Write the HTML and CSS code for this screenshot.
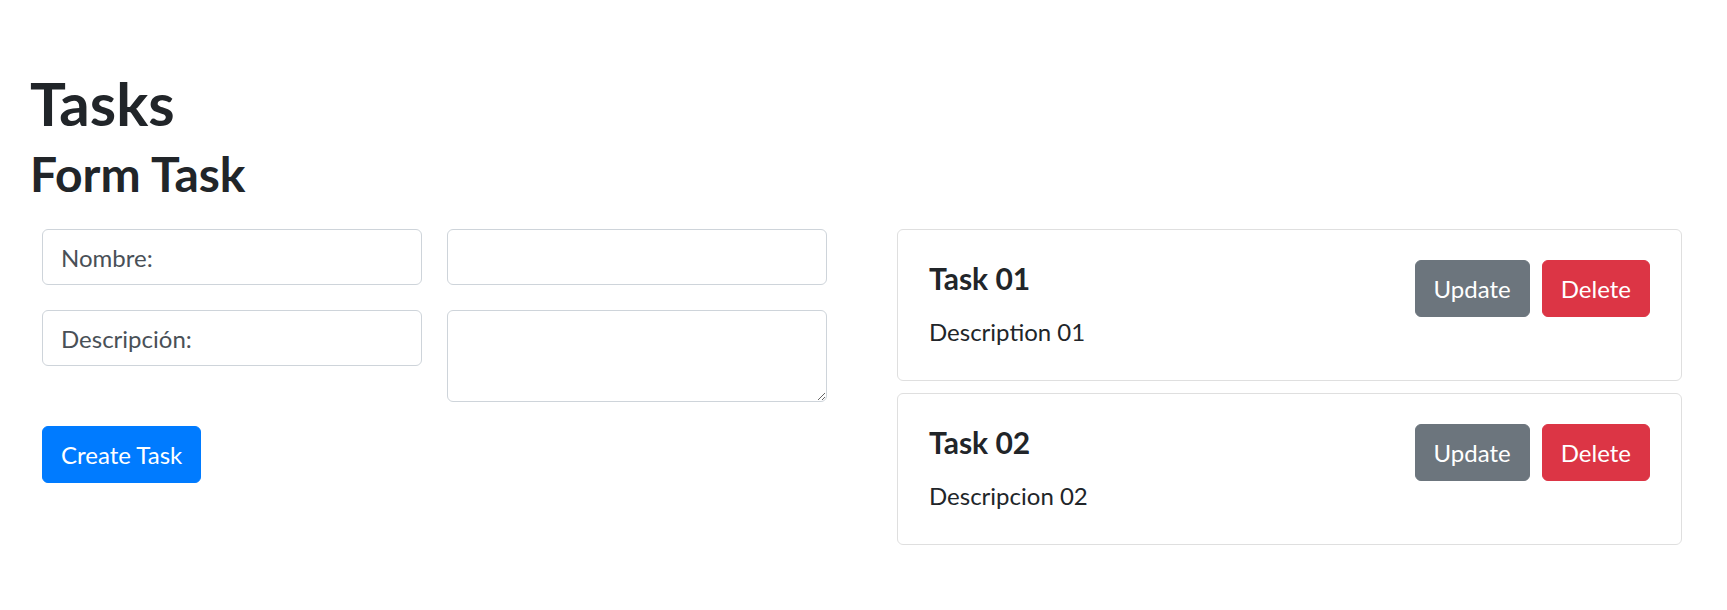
FILE: index.html
```html
<!DOCTYPE html>
<html lang="es">
<head>
<meta charset="utf-8">
<title>Tasks</title>
<link rel="stylesheet" href="styles.css">
</head>
<body>
<div class="page">
  <h1 class="page-title">Tasks</h1>
  <h2 class="section-title">Form Task</h2>
  <div class="main">
    <form class="task-form">
      <div class="form-grid">
        <input class="field field-label" type="text" value="Nombre:" readonly>
        <input class="field" type="text">
        <input class="field field-label" type="text" value="Descripción:" readonly>
        <textarea class="field field-area"></textarea>
      </div>
      <button type="button" class="btn btn-primary">Create Task</button>
    </form>
    <div class="task-list">
      <div class="card">
        <div class="card-actions">
          <button type="button" class="btn btn-secondary">Update</button>
          <button type="button" class="btn btn-danger">Delete</button>
        </div>
        <h5 class="card-title">Task 01</h5>
        <p class="card-text">Description 01</p>
      </div>
      <div class="card">
        <div class="card-actions">
          <button type="button" class="btn btn-secondary">Update</button>
          <button type="button" class="btn btn-danger">Delete</button>
        </div>
        <h5 class="card-title">Task 02</h5>
        <p class="card-text">Descripcion 02</p>
      </div>
    </div>
  </div>
</div>
</body>
</html>
```
FILE: styles.css
```css
* { box-sizing: border-box; }
html, body { margin: 0; padding: 0; background: #fff; }
body {
  font-family: "Lato", "Open Sans", sans-serif;
  color: #212529;
  font-size: 24px;
  line-height: 36px;
}
.page {
  padding: 67px 30px 0 30px;
}
.page-title {
  margin: 0 0 6px 0;
  font-size: 60px;
  line-height: 72px;
  font-weight: 700;
}
.section-title {
  margin: 0 0 26px 0;
  font-size: 48px;
  line-height: 58px;
  font-weight: 700;
}
.main {
  display: grid;
  grid-template-columns: 1fr 1fr;
  column-gap: 70px;
  padding: 0 15px 0 12px;
  align-items: start;
}
.task-form {
  display: flex;
  flex-direction: column;
  align-items: flex-start;
  gap: 24px;
}
.form-grid {
  width: 100%;
  display: grid;
  grid-template-columns: 1fr 1fr;
  column-gap: 25px;
  row-gap: 25px;
  align-items: start;
}
.field {
  display: block;
  width: 100%;
  height: 56px;
  padding: 0 18px;
  font-family: inherit;
  font-size: 24px;
  line-height: 36px;
  color: #495057;
  background: #fff;
  border: 1px solid #ced4da;
  border-radius: 6px;
  outline: none;
}
.field-area {
  height: 92px;
  padding: 9px 18px;
  resize: vertical;
}
.btn {
  display: inline-block;
  height: 57px;
  padding: 0 18px;
  font-family: inherit;
  font-size: 24px;
  line-height: 55px;
  font-weight: 400;
  color: #fff;
  border: 1px solid transparent;
  border-radius: 6px;
  cursor: pointer;
}
.btn-primary { background: #007bff; border-color: #007bff; }
.btn-secondary { background: #6c757d; border-color: #6c757d; }
.btn-danger { background: #dc3545; border-color: #dc3545; }
.task-list {
  display: flex;
  flex-direction: column;
  gap: 12px;
}
.card {
  border: 1px solid #dfdfdf;
  border-radius: 6px;
  padding: 30px 31px;
  background: #fff;
}
.card-actions {
  float: right;
  display: flex;
  gap: 12px;
}
.card-title {
  margin: 0 0 18px 0;
  font-size: 30px;
  line-height: 36px;
  font-weight: 700;
}
.card-text {
  margin: 0;
  font-size: 24px;
  line-height: 36px;
}
```
